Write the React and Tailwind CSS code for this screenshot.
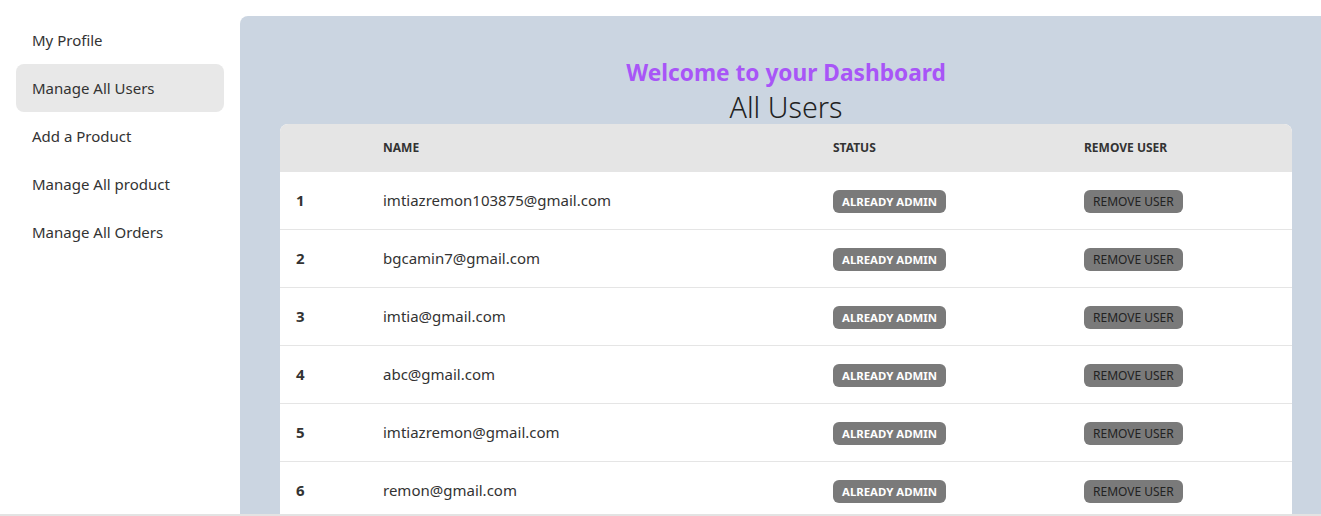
import React from "react";

const users = [
  "imtiazremon103875@gmail.com",
  "bgcamin7@gmail.com",
  "imtia@gmail.com",
  "abc@gmail.com",
  "imtiazremon@gmail.com",
  "remon@gmail.com",
];

const navItems = [
  "My Profile",
  "Manage All Users",
  "Add a Product",
  "Manage All product",
  "Manage All Orders",
];

export default function App() {
  return (
    <div
      className="h-[516px] w-[1321px] flex flex-col overflow-hidden bg-white text-[#333]"
      style={{ fontFamily: '"Noto Sans", "Open Sans", sans-serif' }}
    >
      <div className="flex-1 flex overflow-hidden">
        <aside className="w-[240px] shrink-0 px-4 pt-4">
          <ul className="flex flex-col">
            {navItems.map((item, i) => (
              <li
                key={item}
                className={`h-12 flex items-center px-4 rounded-lg text-[15px] ${
                  i === 1 ? "bg-[#e8e8e8]" : ""
                }`}
              >
                {item}
              </li>
            ))}
          </ul>
        </aside>
        <main className="mt-4 w-[1092px] shrink-0 bg-[#cbd5e1] rounded-tl-lg px-10 pt-[41px]">
          <h2 className="text-center text-[22.7px] leading-8 font-bold text-[#a855f7]">
            Welcome to your Dashboard
          </h2>
          <h3 className="text-center text-[28.7px] leading-[35px] font-light text-[#222]">All Users</h3>
          <div className="bg-white rounded-t-lg overflow-hidden">
            <div className="flex h-12 items-center bg-[#e5e5e5] text-xs font-bold text-[#333] uppercase">
              <div className="w-[87px] px-4"></div>
              <div className="w-[450px] px-4">Name</div>
              <div className="w-[251px] px-4">Status</div>
              <div className="flex-1 px-4">Remove User</div>
            </div>
            {users.map((u, i) => (
              <div
                key={u}
                className="flex h-[58px] items-center border-b border-[#e5e5e5]"
              >
                <div className="w-[87px] px-4 font-bold text-[15px]">{i + 1}</div>
                <div className="w-[450px] px-4 text-[15px]">{u}</div>
                <div className="w-[251px] px-4">
                  <span className="inline-flex items-center h-[23px] px-[9px] rounded-md bg-[#7a7a7a] text-white text-[11.4px] font-bold">
                    ALREADY ADMIN
                  </span>
                </div>
                <div className="flex-1 px-4">
                  <span className="inline-flex items-center h-[23px] px-[9px] rounded-md bg-[#7a7a7a] text-[#222] text-xs">
                    REMOVE USER
                  </span>
                </div>
              </div>
            ))}
          </div>
        </main>
      </div>
      <div className="h-[2px] shrink-0 bg-[#e3e3e3]"></div>
    </div>
  );
}
